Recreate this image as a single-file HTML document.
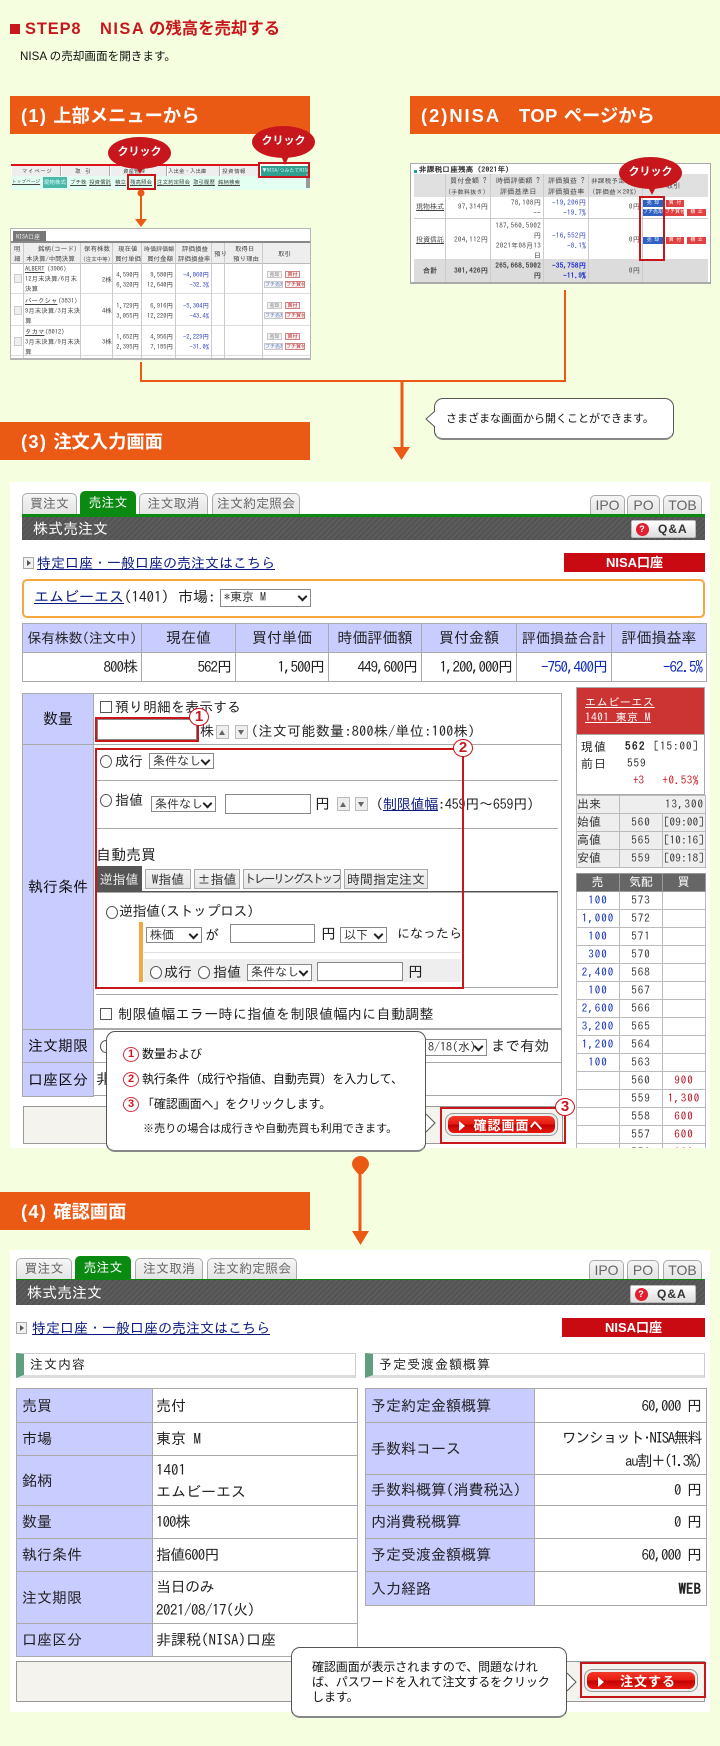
<!DOCTYPE html>
<html lang="ja"><head><meta charset="utf-8"><title>STEP8 NISAの残高を売却する</title>
<style>
html,body{margin:0;padding:0}
body{width:720px;height:1746px;background:#f5ffe0;position:relative;overflow:hidden;font-family:"Liberation Sans","Noto Sans CJK JP",sans-serif;color:#111}
.a,.t{position:absolute;box-sizing:border-box}
.t{white-space:nowrap;line-height:20px}
.i{font-family:"IPAGothic","Liberation Sans",sans-serif;color:#222}
.bar{position:absolute;height:38px;background:#ea5a14;color:#fff;font-weight:bold;font-size:18.300px;line-height:39px;padding-left:10px;box-sizing:border-box;white-space:nowrap}
.bar s{text-decoration:none;letter-spacing:1.300px;margin-right:6px}
.bub{position:absolute;width:63px;height:32px;border-radius:50%;background:#c8161d;color:#fff;font-weight:bold;font-size:11px;line-height:31px;text-align:center}
.rb{position:absolute;box-sizing:border-box;border:2px solid #c8161d}
.tab{position:absolute;box-sizing:border-box;border:1px solid #aaa;border-bottom:0;border-radius:5px 5px 0 0;background:linear-gradient(#f6f6f6,#e4e4e4);color:#666;font:14px/19px "IPAGothic",sans-serif;text-align:center;white-space:nowrap}
.tab.on{background:#0b8a12;color:#fff;border-color:#0b8a12}
.tab.l{font:14px/19px "Liberation Sans",sans-serif}
.dark{position:absolute;background:repeating-linear-gradient(135deg,#535353,#535353 2px,#5c5c5c 2px,#5c5c5c 4px);color:#fff;font:15px/23px "IPAGothic",sans-serif;padding-left:11px;box-sizing:border-box}
.qa{position:absolute;background:linear-gradient(#fff,#ddd);border:1px solid #bbb;border-radius:2px;color:#333;font:bold 12px/17px "Liberation Sans",sans-serif;letter-spacing:1px;padding-left:26px;box-sizing:border-box}
.qa i{position:absolute;left:4px;top:2px;width:13px;height:13px;border-radius:50%;background:#e02030;color:#fff;font:bold 9px/13px "Liberation Sans",sans-serif;text-align:center}
.nisa{position:absolute;background:#c90a12;color:#fff;font:bold 13px/19px "Liberation Sans","Noto Sans CJK JP",sans-serif;text-align:center}
.lnk{color:#0a1a80;text-decoration:underline}
.ic{position:absolute;width:11px;height:12px;box-sizing:border-box;border:1px solid #aaa;background:#f2f2f2}
.ic:after{content:"";position:absolute;left:3px;top:2px;border-left:4px solid #555;border-top:3px solid transparent;border-bottom:3px solid transparent}
table{border-collapse:collapse;table-layout:fixed;position:absolute}
td,th{box-sizing:border-box;border:1px solid #aaa;padding:0;font-weight:normal}
.big{font:15px/20px "IPAGothic","Liberation Sans",sans-serif;color:#222}
.big th{background:#c9ccff;text-align:center}
.big td{text-align:right;padding-right:4px;background:#fff}
.n{letter-spacing:-1px}
.blu{color:#0d2bb8!important}
.det td{text-align:left;padding:0 4px 0 3px}
.det th{text-align:left;padding-left:5px}
.det td.r{text-align:right;padding-right:5px}
.lab{position:absolute;background:#c9ccff;font:15px/20px "IPAGothic",sans-serif;text-align:center;display:flex;align-items:center;justify-content:center;box-sizing:border-box;border:1px solid #aaa}
.hr{position:absolute;height:1px;background:#aaa}
.cb{position:absolute;width:12px;height:12px;box-sizing:border-box;border:1px solid #555;background:#fff}
.ra{position:absolute;width:12px;height:13px;box-sizing:border-box;border:1px solid #555;border-radius:50%;background:#fff}
.sel{position:absolute;box-sizing:border-box;border:1px solid #888;background:#fff;font:12px/15px "IPAGothic",sans-serif;color:#333;padding-left:3px;white-space:nowrap;overflow:hidden}
.sel:after{content:"";position:absolute;right:4px;top:3px;width:5px;height:5px;border-right:2px solid #222;border-bottom:2px solid #222;transform:rotate(45deg)}
.inp{position:absolute;box-sizing:border-box;border:1px solid #888;background:#fff}
.ud{position:absolute;width:13px;height:14px;box-sizing:border-box;border:1px solid #bbb;background:#eee}
.ud:after{content:"";position:absolute;left:2px;border-left:3.5px solid transparent;border-right:3.5px solid transparent}
.ud.u:after{top:4px;border-bottom:5px solid #666}
.ud.d:after{top:4px;border-top:5px solid #666}
.no{position:absolute;width:20px;height:18px;box-sizing:border-box;border:1.5px solid #c8161d;border-radius:50%;background:#fff;color:#c8161d;font:bold 15px/15px "Liberation Sans",sans-serif;text-align:center;z-index:5}
.no2{position:absolute;width:16px;height:15px;box-sizing:border-box;border:1.5px solid #d03040;border-radius:50%;background:#fff;color:#c8161d;font:bold 11px/12px "Liberation Sans",sans-serif;text-align:center}
.sub{position:absolute;box-sizing:border-box;border:1px solid #aaa;background:linear-gradient(#f4f4f4,#e4e4e4);font:13px/19px "IPAGothic",sans-serif;color:#333;text-align:center;white-space:nowrap;overflow:hidden}
.call{position:absolute;box-sizing:border-box;background:#fff;border:1px solid #555;border-bottom:2px solid #888;border-radius:9px}
.btn{position:absolute;box-sizing:border-box;border:1px solid #999;border-radius:8px;background:#eee;padding:2px}
.btn div{height:100%;border-radius:6px;background:linear-gradient(#f23a2a 0,#e81a10 48%,#c00000 52%,#e81a10 100%);color:#fff;font:bold 13px/19px "Liberation Sans","Noto Sans CJK JP",sans-serif;text-align:center;letter-spacing:1px;position:relative;padding-left:14px;box-sizing:border-box}
.btn div:before{content:"";position:absolute;left:11px;top:5px;border-left:6px solid #fff;border-top:5px solid transparent;border-bottom:5px solid transparent}
.sechd{position:absolute;height:25px;box-sizing:border-box;background:#fff;border:1px solid #ccc;border-bottom:3px solid #ddd;border-left:8px solid #5f9f80;font:13px/22px "IPAGothic",sans-serif;padding-left:6px;letter-spacing:1px;color:#222}
.m{filter:blur(.35px)}
.m .t{font-family:"IPAGothic",sans-serif;line-height:10px;font-size:6.500px;color:#444}
.m2 .t{font-size:7px;letter-spacing:.3px}
.m1 .t{font-size:5.500px}
.mb{position:absolute;height:7px;box-sizing:border-box;font:5px/6px "IPAGothic",sans-serif;text-align:center;white-space:nowrap;overflow:hidden}
.mr{background:#e04040;color:#fff}.mbl{background:#2f62c0;color:#fff}
.mo{border:1px solid #c8c8c8;background:#f2f2f2;color:#777}.mo.x{color:#c8161d;border-color:#d08080}
.ord{font:11px/17px "IPAGothic",sans-serif;letter-spacing:1px;color:#333}
.ord td{text-align:center;border-color:#bbb;background:#fff}
</style></head><body>

<div class="a" style="left:10px;top:24px;width:10px;height:10px;background:#c8161d"></div>
<span class="t" style="left:25px;top:19px;font-size:16.400px;font-weight:bold;color:#c8161d;letter-spacing:.9px">STEP8</span>
<span class="t" style="left:100px;top:19px;font-size:16.400px;font-weight:bold;color:#c8161d;letter-spacing:1.500px">NISA</span>
<span class="t" style="left:149px;top:19px;font-size:16.400px;font-weight:bold;color:#c8161d">の残高を売却する</span>
<span class="t" style="left:20px;top:47px;font-size:11.600px">NISA の売却画面を開きます。</span>

<div class="bar" style="left:10px;top:96px;width:300px;padding-left:11px"><s>(1)</s>上部メニューから</div>
<div class="bar" style="left:410px;top:96px;width:310px;padding-left:11px"><s style="letter-spacing:2px;margin-right:18px">(2)NISA</s><s style="letter-spacing:.5px;margin-right:6px">TOP</s>ページから</div>

<!-- menu screenshot -->
<div class="a m m1" style="left:11px;top:164px;width:299px;height:26px;background:#fff">
 <div class="a" style="left:0;top:0;width:247px;height:2px;background:#e01020"></div>
 <div class="a" style="left:1px;top:2px;width:49px;height:10px;background:#eee;border-right:1px solid #aaa"></div>
 <div class="a" style="left:51px;top:2px;width:48px;height:10px;background:#eee;border-right:1px solid #aaa"></div>
 <div class="a" style="left:100px;top:2px;width:56px;height:10px;background:#eee;border-right:1px solid #aaa"></div>
 <div class="a" style="left:157px;top:2px;width:52px;height:10px;background:#eee;border-right:1px solid #aaa"></div>
 <div class="a" style="left:210px;top:2px;width:38px;height:10px;background:#eee"></div>
 <span class="t" style="left:11px;top:2px;letter-spacing:.6px">マイページ</span><span class="t" style="left:64px;top:2px;letter-spacing:1px">取 引</span><span class="t" style="left:112px;top:2px">資産管理</span><span class="t" style="left:157px;top:2px">入出金・入出庫</span><span class="t" style="left:211px;top:2px;letter-spacing:.5px">投資情報</span>
 <div class="a" style="left:250px;top:2px;width:48px;height:10px;background:#2f9f90"></div>
 <span class="t" style="left:251px;top:2px;color:#dff;font-size:5px">▼NISA/つみたてNISA</span>
 <div class="a" style="left:0;top:12px;width:299px;height:14px;background:#e2fff2"></div>
 <div class="a" style="left:32px;top:13px;width:24px;height:11px;background:#4db8a8"></div>
 <div class="a" style="left:295px;top:10px;width:4px;height:14px;background:#999"></div>
 <span class="t lnk" style="left:1px;top:13px;font-size:4.700px">トップページ</span>
 <span class="t" style="left:33px;top:13px;color:#dff">現物株式</span>
 <span class="t lnk" style="left:59px;top:13px">プチ株</span>
 <span class="t lnk" style="left:78px;top:13px">投資信託</span>
 <span class="t lnk" style="left:104px;top:13px">積立</span>
 <span class="t lnk" style="left:119px;top:13px">残高照会</span>
 <span class="t lnk" style="left:146px;top:13px">注文約定照会</span>
 <span class="t lnk" style="left:182px;top:13px">取引履歴</span>
 <span class="t lnk" style="left:207px;top:13px">銘柄検索</span>
</div>
<div class="rb" style="left:258px;top:162px;width:52px;height:16px"></div>
<div class="rb" style="left:127px;top:174px;width:29px;height:16px"></div>

<!-- holdings screenshot -->
<div class="a m" style="left:10px;top:228px;width:301px;height:132px;background:#fff;border:1px solid #b5b5b5;border-bottom:2px solid #b5b5b5;overflow:hidden">
 <div class="a" style="left:2px;top:2px;width:33px;height:11px;background:#777"></div>
 <span class="t" style="left:5px;top:3px;color:#eee;font-size:6px">NISA口座</span>
 <div class="a" style="left:0;top:12px;width:300px;height:2px;background:#888"></div>
 <div class="a" style="left:0;top:14px;width:300px;height:21px;background:#eee"></div>
 <div class="a" style="left:0;top:64px;width:300px;height:1px;background:#ddd"></div>
 <div class="a" style="left:0;top:96px;width:300px;height:1px;background:#ddd"></div>
 <div class="a" style="left:0;top:126px;width:300px;height:1px;background:#ddd"></div>
 <div class="a" style="left:0;top:34px;width:300px;height:1px;background:#bbb"></div>
 <div class="a" style="left:12px;top:14px;width:1px;height:118px;background:#ccc"></div>
 <div class="a" style="left:69px;top:14px;width:1px;height:118px;background:#ccc"></div>
 <div class="a" style="left:101px;top:14px;width:1px;height:118px;background:#ccc"></div>
 <div class="a" style="left:130px;top:14px;width:1px;height:118px;background:#ccc"></div>
 <div class="a" style="left:164px;top:14px;width:1px;height:118px;background:#ccc"></div>
 <div class="a" style="left:200px;top:14px;width:1px;height:118px;background:#ccc"></div>
 <div class="a" style="left:213px;top:14px;width:1px;height:118px;background:#ccc"></div>
 <div class="a" style="left:251px;top:14px;width:1px;height:118px;background:#ccc"></div>
 <span class="t" style="left:3px;top:15px">明<br>細</span>
 <span class="t" style="left:27px;top:15px">銘柄(コード)</span><span class="t" style="left:15px;top:25px">本決算/中間決算</span>
 <span class="t" style="left:73px;top:15px">保有株数</span><span class="t" style="left:72px;top:25px;font-size:5.500px">(注文中等)</span>
 <span class="t" style="left:107px;top:15px">現在値</span><span class="t lnk" style="left:104px;top:25px;text-decoration:none">買付単価</span>
 <span class="t" style="left:133px;top:15px;font-size:6px">時価評価額</span><span class="t" style="left:136px;top:25px">買付金額</span>
 <span class="t" style="left:171px;top:15px">評価損益</span><span class="t" style="left:167px;top:25px">評価損益率</span>
 <span class="t" style="left:203px;top:20px">預り</span>
 <span class="t" style="left:224px;top:15px">取得日</span><span class="t" style="left:222px;top:25px">預り理由</span>
 <span class="t" style="left:267px;top:20px">取引</span>

 <div class="a" style="left:3px;top:45px;width:8px;height:9px;background:#eee;border:1px solid #ccc"></div>
 <div class="a" style="left:3px;top:77px;width:8px;height:9px;background:#eee;border:1px solid #ccc"></div>
 <div class="a" style="left:3px;top:108px;width:8px;height:9px;background:#eee;border:1px solid #ccc"></div>

 <span class="t lnk" style="left:14px;top:35px">ALBERT</span><span class="t" style="left:36px;top:35px">(3906)</span>
 <span class="t" style="left:14px;top:45px">12月末決算/6月末</span><span class="t" style="left:14px;top:55px">決算</span>
 <span class="t" style="left:91px;top:46px">2株</span>
 <span class="t" style="right:171px;top:41px">4,590円</span><span class="t" style="right:171px;top:51px">6,320円</span>
 <span class="t" style="right:137px;top:41px">9,580円</span><span class="t" style="right:137px;top:51px">12,640円</span>
 <span class="t" style="right:101px;top:41px;color:#3040c0">-4,060円</span><span class="t" style="right:101px;top:51px;color:#3040c0">-32.3%</span>

 <span class="t lnk" style="left:14px;top:67px">バークシャ</span><span class="t" style="left:47px;top:67px">(3831)</span>
 <span class="t" style="left:14px;top:77px">9月末決算/3月末決</span><span class="t" style="left:14px;top:87px">算</span>
 <span class="t" style="left:91px;top:77px">4株</span>
 <span class="t" style="right:171px;top:72px">1,729円</span><span class="t" style="right:171px;top:82px">3,055円</span>
 <span class="t" style="right:137px;top:72px">6,916円</span><span class="t" style="right:137px;top:82px">12,220円</span>
 <span class="t" style="right:101px;top:72px;color:#3040c0">-5,304円</span><span class="t" style="right:101px;top:82px;color:#3040c0">-43.4%</span>

 <span class="t lnk" style="left:14px;top:98px">タカマ</span><span class="t" style="left:34px;top:98px">(8012)</span>
 <span class="t" style="left:14px;top:108px">3月末決算/9月末決</span><span class="t" style="left:14px;top:118px">算</span>
 <span class="t" style="left:91px;top:108px">3株</span>
 <span class="t" style="right:171px;top:103px">1,652円</span><span class="t" style="right:171px;top:113px">2,395円</span>
 <span class="t" style="right:137px;top:103px">4,956円</span><span class="t" style="right:137px;top:113px">7,185円</span>
 <span class="t" style="right:101px;top:103px;color:#3040c0">-2,229円</span><span class="t" style="right:101px;top:113px;color:#3040c0">-31.0%</span>

 <div class="mb mo" style="left:256px;top:42px;width:15px">売却</div><div class="mb mo x" style="left:274px;top:42px;width:15px">買付</div>
 <div class="mb mo" style="left:253px;top:52px;width:19px;color:#5070c0">プチ売却</div><div class="mb mo x" style="left:274px;top:52px;width:20px">プチ買付</div>
 <div class="mb mo" style="left:256px;top:73px;width:15px">売却</div><div class="mb mo x" style="left:274px;top:73px;width:15px">買付</div>
 <div class="mb mo" style="left:253px;top:83px;width:19px;color:#5070c0">プチ売却</div><div class="mb mo x" style="left:274px;top:83px;width:20px">プチ買付</div>
 <div class="mb mo" style="left:256px;top:104px;width:15px">売却</div><div class="mb mo x" style="left:274px;top:104px;width:15px">買付</div>
 <div class="mb mo" style="left:253px;top:114px;width:19px;color:#5070c0">プチ売却</div><div class="mb mo x" style="left:274px;top:114px;width:20px">プチ買付</div>
</div>

<!-- NISA top screenshot -->
<div class="a m m2" style="left:410px;top:163px;width:301px;height:121px;background:#fff;border:1px solid #aaa;border-bottom:2px solid #aaa;overflow:hidden">
 <div class="a" style="left:3px;top:6px;width:3px;height:3px;background:#1f9f9f"></div>
 <span class="t" style="left:8px;top:0;font-size:7.500px;font-weight:bold;color:#333">非課税口座残高（2021年）</span>
 <div class="a" style="left:3px;top:10px;width:294px;height:23px;background:#e0e0e0"></div>
 <div class="a" style="left:3px;top:95px;width:294px;height:23px;background:#dcdcdc"></div>
 <div class="a" style="left:3px;top:54px;width:294px;height:1px;background:#ccc"></div>
 <div class="a" style="left:34px;top:10px;width:1px;height:108px;background:#ccc"></div>
 <div class="a" style="left:79px;top:10px;width:1px;height:108px;background:#ccc"></div>
 <div class="a" style="left:132px;top:10px;width:1px;height:108px;background:#ccc"></div>
 <div class="a" style="left:177px;top:10px;width:1px;height:108px;background:#ccc"></div>
 <div class="a" style="left:231px;top:10px;width:1px;height:108px;background:#ccc"></div>
 <span class="t" style="left:39px;top:12px;width:36px">買付金額 ?</span><span class="t" style="left:37px;top:23px;font-size:6px">(手数料抜き)</span>
 <span class="t" style="left:85px;top:12px">時価評価額 ?</span><span class="t" style="left:89px;top:23px">評価基準日</span>
 <span class="t" style="left:137px;top:12px">評価損益 ?</span><span class="t" style="left:137px;top:23px">評価損益率</span>
 <span class="t" style="left:180px;top:12px;font-size:6.500px">非課税予定</span><span class="t" style="left:181px;top:23px;font-size:6.500px">(評価益×20%)</span>
 <span class="t" style="left:255px;top:17px">取引</span>
 <span class="t lnk" style="left:5px;top:38px;letter-spacing:0">現物株式</span>
 <span class="t" style="right:222px;top:38px">97,314円</span>
 <span class="t" style="right:169px;top:34px">78,108円</span><span class="t" style="right:169px;top:44px">--</span>
 <span class="t" style="right:124px;top:34px;color:#3040c0">-19,206円</span><span class="t" style="right:124px;top:44px;color:#3040c0">-19.7%</span>
 <span class="t" style="right:70px;top:38px">0円</span>
 <span class="t lnk" style="left:5px;top:71px;letter-spacing:0">投資信託</span>
 <span class="t" style="right:222px;top:71px">204,112円</span>
 <span class="t" style="right:169px;top:57px">187,560.5902</span><span class="t" style="right:169px;top:67px">円</span><span class="t" style="right:169px;top:77px">2021年08月13</span><span class="t" style="right:169px;top:87px">日</span>
 <span class="t" style="right:124px;top:67px;color:#3040c0">-16,552円</span><span class="t" style="right:124px;top:77px;color:#3040c0">-8.1%</span>
 <span class="t" style="right:70px;top:71px">0円</span>
 <span class="t" style="left:12px;top:102px;font-weight:bold">合計</span>
 <span class="t" style="right:222px;top:102px;font-weight:bold">301,426円</span>
 <span class="t" style="right:169px;top:97px;font-weight:bold">265,668.5902</span><span class="t" style="right:169px;top:107px;font-weight:bold">円</span>
 <span class="t" style="right:124px;top:97px;font-weight:bold;color:#1a2ad0">-35,758円</span><span class="t" style="right:124px;top:107px;font-weight:bold;color:#1a2ad0">-11.9%</span>
 <span class="t" style="right:70px;top:102px">0円</span>
 <div class="mb mbl" style="left:232px;top:36px;width:20px">売 却</div><div class="mb mr" style="left:255px;top:36px;width:18px">買 付</div>
 <div class="mb mbl" style="left:232px;top:45px;width:20px">プチ売却</div><div class="mb mr" style="left:254px;top:45px;width:19px">プチ買付</div><div class="mb mr" style="left:276px;top:45px;width:19px">積 立</div>
 <div class="mb mbl" style="left:232px;top:73px;width:20px">売 却</div><div class="mb mr" style="left:255px;top:73px;width:18px">買 付</div><div class="mb mr" style="left:276px;top:73px;width:19px">積 立</div>
</div>
<div class="rb" style="left:639px;top:196px;width:26px;height:65px"></div>

<!-- connecting arrows -->
<svg class="a" style="left:0;top:0;z-index:3" width="720" height="1746" viewBox="0 0 720 1746" fill="none">
 <g fill="#c8161d">
  <path d="M281 156h8l-4 9z"/><path d="M136 167h8l-4 7z"/><path d="M648 187h8l-4 8z"/>
 </g>
 <g stroke="#ea5a14">
  <path d="M141 191V222" stroke-width="2"/>
  <path d="M141 362V381H565V290" stroke-width="2"/>
  <path d="M402 381V449" stroke-width="3"/>
  <path d="M360 1168V1233" stroke-width="3"/>
 </g>
 <g fill="#ea5a14">
  <circle cx="141" cy="193" r="3.5"/>
  <path d="M135 219h12l-6 8z"/>
  <path d="M393 447h17l-8.500 13z"/>
  <path d="M352 1231h17l-8.500 14z"/>
  <path d="M352 1164a8.500 8 0 0 1 17 0c0 4-4 7-6 10h-5c-2-3-6-6-6-10z"/>
 </g>
</svg>

<div class="bub" style="left:252px;top:126px;z-index:4">クリック</div>
<div class="bub" style="left:108px;top:137px;z-index:4">クリック</div>
<div class="bub" style="left:619px;top:157px;z-index:4">クリック</div>

<div class="call" style="left:434px;top:398px;width:240px;height:42px"></div>
<svg class="a" style="left:424px;top:410px" width="12" height="18"><path d="M11 1L2 9l9 8" fill="#fff" stroke="#555"/></svg>
<span class="t" style="left:446px;top:409px;font-size:11px">さまざまな画面から開くことができます。</span>

<div class="bar" style="left:0;top:422px;width:310px;padding-left:21px"><s>(3)</s>注文入力画面</div>

<!-- panel 3 -->
<div class="a" style="left:10px;top:482px;width:700px;height:666px;background:#fff"></div>
<div class="tab" style="left:22px;top:493px;width:55px;height:21px;font-size:13px">買注文</div>
<div class="tab on" style="left:80px;top:491px;width:56px;height:24px;line-height:22px;font-size:13px">売注文</div>
<div class="tab" style="left:139px;top:493px;width:69px;height:21px;font-size:13px">注文取消</div>
<div class="tab" style="left:212px;top:493px;width:88px;height:21px;font-size:13px">注文約定照会</div>
<div class="tab l" style="left:590px;top:495px;width:35px;height:19px">IPO</div>
<div class="tab l" style="left:627px;top:495px;width:33px;height:19px">PO</div>
<div class="tab l" style="left:663px;top:495px;width:39px;height:19px">TOB</div>
<div class="a" style="left:22px;top:514px;width:683px;height:3px;background:#0b8a12"></div>
<div class="dark" style="left:22px;top:517px;width:683px;height:23px">株式売注文</div>
<div class="qa" style="left:631px;top:520px;width:65px;height:18px"><i>?</i>Q&amp;A</div>

<div class="ic" style="left:23px;top:557px"></div>
<span class="t i lnk" style="left:37px;top:553px;font-size:14px;color:#0a1a80">特定口座・一般口座の売注文はこちら</span>
<div class="nisa" style="left:564px;top:553px;width:141px;height:19px">NISA口座</div>

<div class="a" style="left:22px;top:579px;width:683px;height:39px;border:2px solid #f5a742;border-radius:5px;background:#fff"></div>
<span class="t i" style="left:34px;top:587px;font-size:15px"><span class="lnk">エムビーエス</span>(1401)</span>
<span class="t i" style="left:178px;top:587px;font-size:15px">市場:</span>
<div class="sel" style="left:220px;top:589px;width:91px;height:18px">*東京 M</div>

<table class="big" style="left:22px;top:623px;width:684px"><colgroup><col style="width:119px"><col style="width:94px"><col style="width:93px"><col style="width:93px"><col style="width:95px"><col style="width:95px"><col style="width:95px"></colgroup>
<tr style="height:29px"><th style="font-size:14px;letter-spacing:-.3px">保有株数(注文中)</th><th>現在値</th><th>買付単価</th><th>時価評価額</th><th>買付金額</th><th style="font-size:14px">評価損益合計</th><th>評価損益率</th></tr>
<tr style="height:29px" class="n"><td>800株</td><td>562円</td><td>1,500円</td><td>449,600円</td><td>1,200,000円</td><td class="blu">-750,400円</td><td class="blu">-62.5%</td></tr>
</table>

<!-- order form -->
<div class="a" style="left:22px;top:693px;width:540px;height:403px;border:1px solid #aaa;background:#fff"></div>
<div class="lab" style="left:22px;top:693px;width:72px;height:52px">数量</div>
<div class="lab" style="left:22px;top:744px;width:72px;height:286px">執行条件</div>
<div class="lab" style="left:22px;top:1029px;width:72px;height:34px">注文期限</div>
<div class="lab" style="left:22px;top:1062px;width:72px;height:35px">口座区分</div>
<div class="hr" style="left:94px;top:744px;width:468px"></div>
<div class="hr" style="left:94px;top:1028px;width:468px;height:2px"></div>
<div class="hr" style="left:94px;top:1062px;width:468px"></div>

<div class="cb" style="left:100px;top:701px"></div>
<span class="t i" style="left:115px;top:697px;font-size:14px">預り明細を表示する</span>
<div class="inp" style="left:97px;top:719px;width:100px;height:21px"></div>
<div class="rb" style="left:95px;top:717px;width:104px;height:25px"></div>
<div class="no" style="left:189px;top:708px">1</div>
<span class="t i" style="left:200px;top:721px;font-size:14px">株</span>
<div class="ud u" style="left:216px;top:725px"></div><div class="ud d" style="left:235px;top:725px"></div>
<span class="t i" style="left:251px;top:721px;font-size:14px;letter-spacing:.35px">(注文可能数量:800株/単位:100株)</span>

<div class="ra" style="left:100px;top:755px"></div>
<span class="t i" style="left:115px;top:751px;font-size:14px">成行</span>
<div class="sel" style="left:149px;top:753px;width:65px;height:16px">条件なし</div>
<div class="hr" style="left:96px;top:780px;width:462px"></div>

<div class="ra" style="left:100px;top:794px"></div>
<span class="t i" style="left:115px;top:790px;font-size:14px">指値</span>
<div class="sel" style="left:151px;top:796px;width:65px;height:16px">条件なし</div>
<div class="inp" style="left:225px;top:794px;width:86px;height:20px"></div>
<span class="t i" style="left:315px;top:794px;font-size:15px">円</span>
<div class="ud u" style="left:337px;top:797px"></div><div class="ud d" style="left:355px;top:797px"></div>
<span class="t i" style="left:376px;top:794px;font-size:14px;letter-spacing:-.2px">(<span class="lnk">制限値幅</span>:459円～659円)</span>
<div class="hr" style="left:96px;top:828px;width:462px"></div>

<span class="t i" style="left:96px;top:845px;font-size:15px">自動売買</span>
<div class="sub" style="left:96px;top:866px;width:46px;height:26px;background:#555;color:#eee;border-color:#555;line-height:26px">逆指値</div>
<div class="sub" style="left:145px;top:869px;width:46px;height:20px">W指値</div>
<div class="sub" style="left:194px;top:869px;width:46px;height:20px">±指値</div>
<div class="sub" style="left:243px;top:869px;width:98px;height:20px;font-size:12px;letter-spacing:-2.300px">トレーリングストップ</div>
<div class="sub" style="left:344px;top:869px;width:84px;height:20px">時間指定注文</div>
<div class="a" style="left:96px;top:891px;width:462px;height:2px;background:#555"></div>
<div class="a" style="left:96px;top:892px;width:462px;height:96px;border:1px solid #aaa;background:#fff"></div>
<div class="ra" style="left:106px;top:906px"></div>
<span class="t i" style="left:119px;top:901px;font-size:14px;letter-spacing:-.5px">逆指値(ストップロス)</span>
<div class="a" style="left:139px;top:922px;width:4px;height:60px;background:#f5a742"></div>
<div class="sel" style="left:146px;top:927px;width:56px;height:16px">株価</div>
<span class="t i" style="left:205px;top:925px;font-size:14px">が</span>
<div class="inp" style="left:230px;top:924px;width:85px;height:19px"></div>
<span class="t i" style="left:321px;top:924px;font-size:15px">円</span>
<div class="sel" style="left:340px;top:927px;width:47px;height:16px">以下</div>
<span class="t i" style="left:397px;top:924px;font-size:13px">になったら</span>
<div class="hr" style="left:144px;top:952px;width:317px;background:#ddd"></div>
<div class="a" style="left:144px;top:959px;width:317px;height:23px;background:#eee"></div>
<div class="ra" style="left:150px;top:966px"></div>
<span class="t i" style="left:164px;top:962px;font-size:14px">成行</span>
<div class="ra" style="left:198px;top:966px"></div>
<span class="t i" style="left:213px;top:962px;font-size:14px">指値</span>
<div class="sel" style="left:247px;top:964px;width:65px;height:17px">条件なし</div>
<div class="inp" style="left:317px;top:962px;width:86px;height:19px"></div>
<span class="t i" style="left:408px;top:962px;font-size:15px">円</span>
<div class="rb" style="left:95px;top:748px;width:369px;height:241px"></div>
<div class="no" style="left:453px;top:739px">2</div>
<div class="hr" style="left:96px;top:994px;width:462px"></div>
<div class="cb" style="left:100px;top:1008px"></div>
<span class="t i" style="left:118px;top:1004px;font-size:14px;letter-spacing:.36px">制限値幅エラー時に指値を制限値幅内に自動調整</span>

<div class="ra" style="left:100px;top:1040px"></div>
<div class="sel" style="left:420px;top:1039px;width:67px;height:17px;padding-left:7px;text-align:right;padding-right:17px">8/18(水)</div>
<span class="t i" style="left:491px;top:1036px;font-size:14.500px">まで有効</span>
<span class="t i" style="left:96px;top:1069px;font-size:15px">非課税</span>

<div class="a" style="left:23px;top:1106px;width:540px;height:38px;background:#f5f3ee;border:1px solid #999"></div>
<div class="btn" style="left:445px;top:1113px;width:113px;height:23px"><div>確認画面へ</div></div>
<div class="rb" style="left:440px;top:1107px;width:126px;height:37px"></div>
<div class="no" style="left:555px;top:1098px">3</div>

<!-- order book -->
<div class="a" style="left:576px;top:687px;width:129px;height:108px;border:1px solid #aaa;background:#fff"></div>
<div class="a" style="left:576px;top:687px;width:129px;height:48px;background:#cc3333;border:1px solid #aaa"></div>
<span class="t i" style="left:585px;top:693px;font-size:11px;color:#fff;text-decoration:underline;letter-spacing:.6px">エムビーエス</span>
<span class="t i" style="left:585px;top:708px;font-size:11px;color:#fff;text-decoration:underline;letter-spacing:.6px">1401 東京 M</span>
<div class="a i" style="left:581px;top:739px;font:12px/17px 'IPAGothic',sans-serif;letter-spacing:1px;white-space:nowrap">現値<br>前日</div>
<span class="t i" style="left:625px;top:737px;font-size:11px;font-weight:bold;letter-spacing:1.500px">562</span>
<span class="t i" style="left:627px;top:754px;font-size:11px;letter-spacing:1px">559</span>
<span class="t i" style="right:21px;top:737px;font-size:11px;letter-spacing:1px">[15:00]</span>
<span class="t i" style="left:633px;top:771px;font-size:11px;color:#c8161d">+3</span>
<span class="t i" style="right:21px;top:771px;font-size:11px;color:#c8161d;letter-spacing:.6px">+0.53%</span>

<table class="ord" style="left:576px;top:795px;width:129px"><colgroup><col style="width:43px"><col style="width:43px"><col style="width:43px"></colgroup>
<tr style="height:18px"><td style="background:#eee;text-align:left;font-size:12px;letter-spacing:0">出来</td><td colspan="2" style="background:#eee;text-align:right;padding-right:1px">13,300</td></tr>
<tr style="height:18px"><td style="background:#eee;text-align:left;font-size:12px;letter-spacing:0">始値</td><td style="background:#eee">560</td><td style="background:#eee;letter-spacing:.3px">[09:00]</td></tr>
<tr style="height:18px"><td style="background:#eee;text-align:left;font-size:12px;letter-spacing:0">高値</td><td style="background:#eee">565</td><td style="background:#eee;letter-spacing:.3px">[10:16]</td></tr>
<tr style="height:18px"><td style="background:#eee;text-align:left;font-size:12px;letter-spacing:0">安値</td><td style="background:#eee">559</td><td style="background:#eee;letter-spacing:.3px">[09:18]</td></tr>
</table>

<div class="a" style="left:576px;top:873px;width:130px;height:275px;overflow:hidden">
<table class="ord" style="left:0;top:0;width:129px"><colgroup><col style="width:43px"><col style="width:43px"><col style="width:43px"></colgroup>
<tr style="height:18px"><td style="background:#666;color:#fff;font-size:12px;border-color:#999">売</td><td style="background:#666;color:#fff;font-size:12px;border-color:#999;letter-spacing:0">気配</td><td style="background:#666;color:#fff;font-size:12px;border-color:#999">買</td></tr>
<tr style="height:18px"><td class="blu">100</td><td>573</td><td></td></tr>
<tr style="height:18px"><td class="blu">1,000</td><td>572</td><td></td></tr>
<tr style="height:18px"><td class="blu">100</td><td>571</td><td></td></tr>
<tr style="height:18px"><td class="blu">300</td><td>570</td><td></td></tr>
<tr style="height:18px"><td class="blu">2,400</td><td>568</td><td></td></tr>
<tr style="height:18px"><td class="blu">100</td><td>567</td><td></td></tr>
<tr style="height:18px"><td class="blu">2,600</td><td>566</td><td></td></tr>
<tr style="height:18px"><td class="blu">3,200</td><td>565</td><td></td></tr>
<tr style="height:18px"><td class="blu">1,200</td><td>564</td><td></td></tr>
<tr style="height:18px"><td class="blu">100</td><td>563</td><td></td></tr>
<tr style="height:18px"><td></td><td>560</td><td style="color:#b01020">900</td></tr>
<tr style="height:18px"><td></td><td>559</td><td style="color:#b01020">1,300</td></tr>
<tr style="height:18px"><td></td><td>558</td><td style="color:#b01020">600</td></tr>
<tr style="height:18px"><td></td><td>557</td><td style="color:#b01020">600</td></tr>
<tr style="height:18px"><td></td><td>556</td><td style="color:#b01020">100</td></tr>
</table></div>

<!-- callout 3 -->
<div class="call" style="left:106px;top:1031px;width:320px;height:121px;z-index:6"></div>
<svg class="a" style="left:425px;top:1113px;z-index:7" width="12" height="20"><path d="M1 1l9 9-9 9" fill="#fff" stroke="#555"/></svg>
<div class="no2" style="left:123px;top:1047px;z-index:7">1</div>
<div class="no2" style="left:123px;top:1072px;z-index:7">2</div>
<div class="no2" style="left:123px;top:1097px;z-index:7">3</div>
<span class="t" style="left:142px;top:1044px;font-size:12px;z-index:7">数量および</span>
<span class="t" style="left:142px;top:1069px;font-size:12px;z-index:7;letter-spacing:-.1px">執行条件（成行や指値、自動売買）を入力して、</span>
<span class="t" style="left:142px;top:1094px;font-size:12px;z-index:7;letter-spacing:-.1px">「確認画面へ」をクリックします。</span>
<span class="t" style="left:143px;top:1119px;font-size:11px;z-index:7;letter-spacing:.1px">※売りの場合は成行きや自動売買も利用できます。</span>

<!-- section 4 -->
<div class="bar" style="left:0;top:1192px;width:310px;padding-left:21px"><s>(4)</s>確認画面</div>
<div class="a" style="left:10px;top:1250px;width:700px;height:462px;background:#fff"></div>
<div class="tab" style="left:16px;top:1258px;width:56px;height:21px;font-size:13px">買注文</div>
<div class="tab on" style="left:75px;top:1256px;width:56px;height:24px;line-height:22px;font-size:13px">売注文</div>
<div class="tab" style="left:135px;top:1258px;width:68px;height:21px;font-size:13px">注文取消</div>
<div class="tab" style="left:207px;top:1258px;width:90px;height:21px;font-size:13px">注文約定照会</div>
<div class="tab l" style="left:589px;top:1260px;width:35px;height:19px">IPO</div>
<div class="tab l" style="left:627px;top:1260px;width:32px;height:19px">PO</div>
<div class="tab l" style="left:663px;top:1260px;width:39px;height:19px">TOB</div>
<div class="a" style="left:16px;top:1279px;width:689px;height:1px;background:#0b8a12"></div>
<div class="dark" style="left:16px;top:1280px;width:689px;height:25px;line-height:25px">株式売注文</div>
<div class="qa" style="left:630px;top:1285px;width:66px;height:18px"><i>?</i>Q&amp;A</div>
<div class="ic" style="left:16px;top:1322px"></div>
<span class="t i lnk" style="left:32px;top:1318px;font-size:14px;color:#0a1a80">特定口座・一般口座の売注文はこちら</span>
<div class="nisa" style="left:562px;top:1318px;width:143px;height:19px">NISA口座</div>
<div class="sechd" style="left:16px;top:1353px;width:340px">注文内容</div>
<div class="sechd" style="left:365px;top:1353px;width:340px">予定受渡金額概算</div>

<table class="big det" style="left:16px;top:1388px;width:341px"><colgroup><col style="width:136px"><col style="width:205px"></colgroup>
<tr style="height:34px"><th>売買</th><td>売付</td></tr>
<tr style="height:33px"><th>市場</th><td>東京 M</td></tr>
<tr style="height:50px"><th>銘柄</th><td style="line-height:22px">1401<br>エムビーエス</td></tr>
<tr style="height:33px"><th>数量</th><td class="n">100株</td></tr>
<tr style="height:33px"><th>執行条件</th><td style="letter-spacing:-.8px">指値600円</td></tr>
<tr style="height:52px"><th>注文期限</th><td style="line-height:23px;letter-spacing:-.5px">当日のみ<br>2021/08/17(火)</td></tr>
<tr style="height:33px"><th>口座区分</th><td>非課税(NISA)口座</td></tr>
</table>
<table class="big det" style="left:365px;top:1388px;width:341px"><colgroup><col style="width:169px"><col style="width:172px"></colgroup>
<tr style="height:34px"><th>予定約定金額概算</th><td class="r n">60,000 円</td></tr>
<tr style="height:52px"><th>手数料コース</th><td class="r" style="line-height:23px;letter-spacing:-1.400px">ワンショット･NISA無料<br>au割＋(1.3%)</td></tr>
<tr style="height:31px"><th>手数料概算(消費税込)</th><td class="r n">0 円</td></tr>
<tr style="height:33px"><th>内消費税概算</th><td class="r n">0 円</td></tr>
<tr style="height:33px"><th>予定受渡金額概算</th><td class="r n">60,000 円</td></tr>
<tr style="height:34px"><th>入力経路</th><td class="r" style="font-weight:bold">WEB</td></tr>
</table>

<div class="a" style="left:16px;top:1661px;width:689px;height:41px;background:#f5f3ee;border:1px solid #999"></div>
<div class="btn" style="left:584px;top:1669px;width:114px;height:23px"><div>注文する</div></div>
<div class="rb" style="left:580px;top:1662px;width:126px;height:36px"></div>
<div class="call" style="left:291px;top:1647px;width:276px;height:71px"></div>
<svg class="a" style="left:566px;top:1672px" width="12" height="20"><path d="M1 1l9 9-9 9" fill="#fff" stroke="#555"/></svg>
<span class="t" style="left:312px;top:1657px;font-size:12px;letter-spacing:-.1px">確認画面が表示されますので、問題なけれ</span>
<span class="t" style="left:312px;top:1672px;font-size:12px;letter-spacing:-.1px">ば、パスワードを入れて注文するをクリック</span>
<span class="t" style="left:312px;top:1687px;font-size:12px">します。</span>
</body></html>
